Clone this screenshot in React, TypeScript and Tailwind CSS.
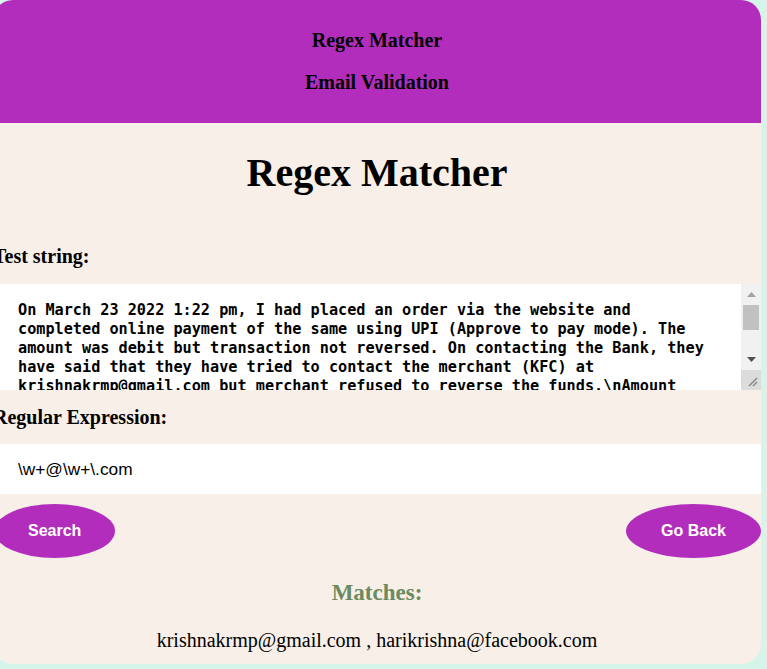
import { useState } from "react";

const SAMPLE = [
  "On March 23 2022 1:22 pm, I had placed an order via the website and",
  "completed online payment of the same using UPI (Approve to pay mode). The",
  "amount was debit but transaction not reversed. On contacting the Bank, they",
  "have said that they have tried to contact the merchant (KFC) at",
  "krishnakrmp@gmail.com but merchant refused to reverse the funds.\\nAmount",
  "debited: Rs. 499.00\\nPlease escalate the issue and write back to",
  "harikrishna@facebook.com at the earliest.",
].join("\n");

// classic scrollbar look, drawn beside the text box
function FakeScrollbar() {
  return (
    <div className="flex w-[20px] flex-col bg-[#f1f1f1]">
      <div className="flex h-[20px] items-center justify-center">
        <svg width="9" height="5" viewBox="0 0 9 5">
          <path d="M0 5 L4.5 0 L9 5 Z" fill="#a3a3a3" />
        </svg>
      </div>
      <div className="mx-[2px] mt-[1px] h-[25px] bg-[#c1c1c1]" />
      <div className="flex-1" />
      <div className="flex h-[20px] items-center justify-center">
        <svg width="9" height="5" viewBox="0 0 9 5">
          <path d="M0 0 L9 0 L4.5 5 Z" fill="#505050" />
        </svg>
      </div>
      <div className="mt-[1px] flex h-[20px] items-end justify-end bg-[#dcdcdc] pb-[3px] pr-[3px]">
        <svg width="10" height="10" viewBox="0 0 10 10">
          <path d="M9 1 L1 9 M9 5 L5 9" stroke="#808080" strokeWidth="1.2" />
        </svg>
      </div>
    </div>
  );
}

export default function App() {
  const [text, setText] = useState(SAMPLE);
  const [pattern, setPattern] = useState("\\w+@\\w+\\.com");

  return (
    <div className="min-h-screen overflow-hidden bg-[#d5f5ea]">
      <div className="ml-[-7px] w-[768px] overflow-hidden rounded-[20px] bg-[#f7efe8] pb-[12px] font-['Liberation_Serif',serif] text-black">
        <header className="flex h-[123px] flex-col items-center gap-[18px] bg-[#b32dbd] pt-[28px]">
          <h3 className="text-[20px] font-bold leading-[24px]">Regex Matcher</h3>
          <h3 className="text-[20px] font-bold leading-[24px]">Email Validation</h3>
        </header>

        <h1 className="mt-[27px] text-center text-[40px] font-bold leading-[46px]">Regex Matcher</h1>

        <label className="mt-[49px] block text-[20px] font-bold leading-[22px]">Test string:</label>
        <div className="mt-[17px] flex h-[106px] bg-white">
          <textarea
            value={text}
            onChange={(e) => setText(e.target.value)}
            className="block h-full flex-1 resize-none overflow-hidden bg-white pb-[2px] pl-[25px] pr-[4px] pt-[17px] font-['DejaVu_Sans_Mono',monospace] text-[15.2px] font-bold leading-[19px] outline-none"
          />
          <FakeScrollbar />
        </div>

        <label className="mt-[16px] block text-[20px] font-bold leading-[22px]">Regular Expression:</label>
        <input
          value={pattern}
          onChange={(e) => setPattern(e.target.value)}
          className="mt-[16px] block h-[50px] w-full bg-white pl-[25px] font-['Liberation_Sans',sans-serif] text-[17.3px] outline-none"
        />

        <div className="mt-[10px] flex justify-between pl-[1px]">
          <button className="h-[54px] rounded-[50%] bg-[#b32dbd] px-[34px] font-['Liberation_Sans',sans-serif] text-[16px] font-bold text-white">
            Search
          </button>
          <button className="h-[54px] rounded-[50%] bg-[#b32dbd] px-[35px] font-['Liberation_Sans',sans-serif] text-[16px] font-bold text-white">
            Go Back
          </button>
        </div>

        <h2 className="mt-[21px] text-center text-[23px] font-bold leading-[28px] text-[#6b8a5f]">Matches:</h2>
        <p className="mt-[21px] text-center text-[20px] leading-[24px]">
          krishnakrmp@gmail.com , harikrishna@facebook.com
        </p>
      </div>
    </div>
  );
}
